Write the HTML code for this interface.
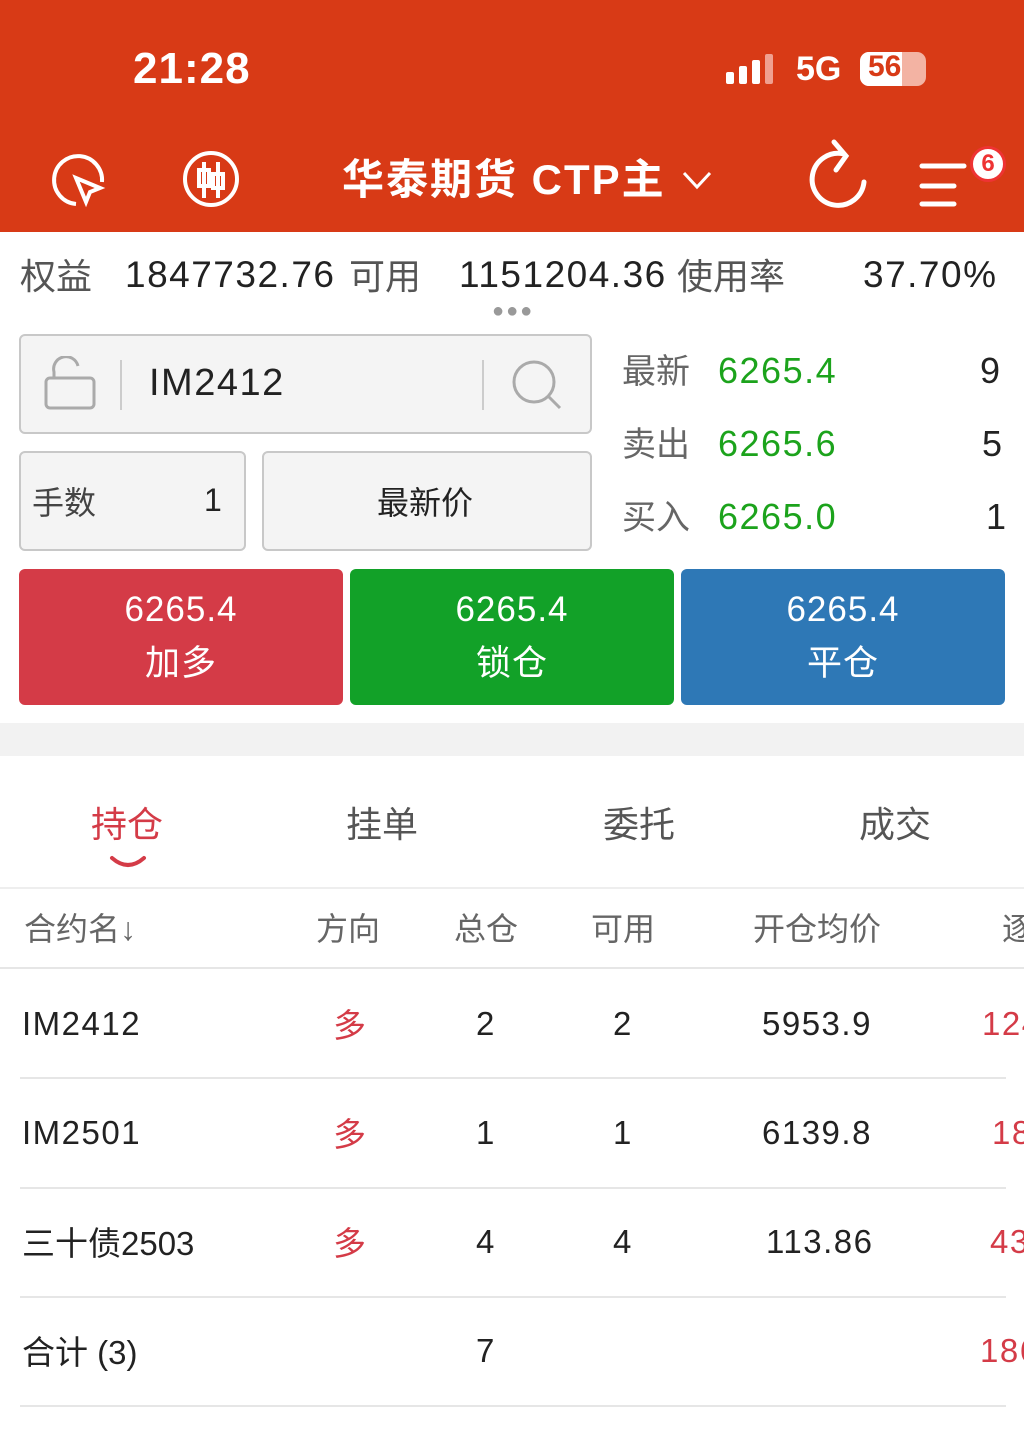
<!DOCTYPE html>
<html><head><meta charset="utf-8"><style>
*{margin:0;padding:0;box-sizing:border-box}
body{width:1024px;height:1455px;overflow:hidden;background:#fff;font-family:"Liberation Sans","Noto Sans CJK SC",sans-serif;position:relative;color:#222}
.a{position:absolute;white-space:nowrap}
.hdr{position:absolute;left:0;top:0;width:1024px;height:232px;background:#D83A16}
.box{position:absolute;background:#f4f4f4;border:2px solid #c8c8c8;border-radius:6px}
.btn{position:absolute;top:569px;height:136px;width:324px;border-radius:6px;color:#fff;text-align:center;font-size:35px;line-height:54px;padding-top:14px;letter-spacing:1px}
.row{position:absolute;left:0;width:1024px;font-size:33px;letter-spacing:1.5px}
.row>span{position:absolute;white-space:nowrap}
.row>span.k{top:-6px}
.ln{position:absolute;left:20px;width:986px;height:2px;background:#e6e6e6}
.n{letter-spacing:1.5px}
</style></head><body>
<div class="hdr"></div>
<div class="a" style="left:133px;top:44px;font-size:44px;font-weight:bold;color:#fff;letter-spacing:1px">21:28</div>
<svg class="a" style="left:726px;top:54px" width="50" height="32"><rect x="0" y="18" width="8" height="12" rx="2" fill="#fff"/><rect x="13" y="12" width="8" height="18" rx="2" fill="#fff"/><rect x="26" y="6" width="8" height="24" rx="2" fill="#fff"/><rect x="39" y="0" width="8" height="30" rx="2" fill="#f0a090"/></svg>
<div class="a" style="left:796px;top:50px;font-size:34px;font-weight:bold;color:#fff">5G</div>
<div class="a" style="left:860px;top:52px;width:66px;height:34px;border-radius:9px;background:#f3b3a3"></div>
<div class="a" style="left:860px;top:52px;width:42px;height:34px;border-radius:9px 0 0 9px;background:#fff"></div>
<div class="a" style="left:868px;top:50px;font-size:30px;font-weight:bold;color:#D83A16">56</div>
<svg class="a" style="left:50px;top:152px" width="56" height="56" fill="none" stroke="#fff" stroke-width="4"><path d="M26 52A24 24 0 1 1 52 30"/><path d="M26 26L50 36L40 40L36 50Z"/></svg>
<svg class="a" style="left:182px;top:150px" width="58" height="58" fill="none" stroke="#fff" stroke-width="4"><circle cx="29" cy="29" r="26"/><path d="M22 12V48M36 12V48"/><rect x="17" y="20" width="10" height="16"/><rect x="31" y="24" width="10" height="14"/></svg>
<div class="a" style="left:342px;top:146px;font-size:42px;font-weight:bold;color:#fff;letter-spacing:2px">华泰期货 CTP主</div>
<svg class="a" style="left:682px;top:170px" width="30" height="20" fill="none" stroke="#fff" stroke-width="3"><path d="M2 3L15 17L28 3"/></svg>
<svg class="a" style="left:806px;top:138px" width="66" height="74" fill="none" stroke="#fff" stroke-width="5" stroke-linecap="round"><path d="M38 16A26 26 0 1 0 58 44"/><path d="M28 4L40 18L30 32"/></svg>
<svg class="a" style="left:918px;top:160px" width="50" height="50" stroke="#fff" stroke-width="5" stroke-linecap="round"><path d="M4 6H46M4 26H36M4 44H36"/></svg>
<div class="a" style="left:970px;top:146px;width:36px;height:36px;border-radius:50%;background:#fff;border:3px solid #e33;color:#e33;font-size:24px;font-weight:bold;text-align:center;line-height:30px">6</div>

<div class="a" style="left:20px;top:248px;font-size:36px;color:#555">权益</div>
<div class="a n" style="left:125px;top:254px;font-size:37px;color:#222">1847732.76</div>
<div class="a" style="left:349px;top:248px;font-size:36px;color:#555">可用</div>
<div class="a n" style="left:459px;top:254px;font-size:37px;color:#222">1151204.36</div>
<div class="a" style="left:677px;top:248px;font-size:36px;color:#555">使用率</div>
<div class="a n" style="left:863px;top:254px;font-size:37px;color:#222">37.70%</div>
<div class="a" style="left:492px;top:300px;font-size:20px;color:#999;letter-spacing:2px">●●●</div>

<div class="box" style="left:19px;top:334px;width:573px;height:100px"></div>
<svg class="a" style="left:42px;top:356px" width="56" height="56" fill="none" stroke="#aaa" stroke-width="3"><rect x="4" y="22" width="48" height="30" rx="4"/><path d="M12 22V16A12 12 0 0 1 36 10"/></svg>
<div class="a" style="left:120px;top:360px;width:2px;height:50px;background:#ccc"></div>
<div class="a n" style="left:149px;top:362px;font-size:38px;color:#222">IM2412</div>
<div class="a" style="left:482px;top:360px;width:2px;height:50px;background:#ccc"></div>
<svg class="a" style="left:510px;top:358px" width="56" height="56" fill="none" stroke="#aaa" stroke-width="3"><circle cx="24" cy="24" r="20"/><path d="M38 38L50 50"/></svg>
<div class="box" style="left:19px;top:451px;width:227px;height:100px"></div>
<div class="a" style="left:32px;top:478px;font-size:32px;color:#444">手数</div>
<div class="a" style="left:204px;top:482px;font-size:32px;color:#222">1</div>
<div class="box" style="left:262px;top:451px;width:330px;height:100px"></div>
<div class="a" style="left:377px;top:478px;font-size:32px;color:#222">最新价</div>

<div class="a" style="left:622px;top:344px;font-size:34px;color:#666">最新</div>
<div class="a n" style="left:718px;top:350px;font-size:36px;color:#1ca31c">6265.4</div>
<div class="a" style="left:980px;top:350px;font-size:36px;color:#222">9</div>
<div class="a" style="left:622px;top:417px;font-size:34px;color:#666">卖出</div>
<div class="a n" style="left:718px;top:423px;font-size:36px;color:#1ca31c">6265.6</div>
<div class="a" style="left:982px;top:423px;font-size:36px;color:#222">5</div>
<div class="a" style="left:622px;top:490px;font-size:34px;color:#666">买入</div>
<div class="a n" style="left:718px;top:496px;font-size:36px;color:#1ca31c">6265.0</div>
<div class="a" style="left:986px;top:496px;font-size:36px;color:#222">1</div>

<div class="btn" style="left:19px;background:#D43B47">6265.4<br>加多</div>
<div class="btn" style="left:350px;background:#12A128">6265.4<br>锁仓</div>
<div class="btn" style="left:681px;background:#2E78B6">6265.4<br>平仓</div>

<div class="a" style="left:0;top:723px;width:1024px;height:33px;background:#f2f2f2"></div>
<div class="a" style="left:91px;top:796px;font-size:36px;color:#D43B47">持仓</div>
<svg class="a" style="left:108px;top:852px" width="40" height="20" fill="none" stroke="#D43B47" stroke-width="4" stroke-linecap="round"><path d="M4 6Q20 20 36 6"/></svg>
<div class="a" style="left:346px;top:796px;font-size:36px;color:#555">挂单</div>
<div class="a" style="left:603px;top:796px;font-size:36px;color:#555">委托</div>
<div class="a" style="left:859px;top:796px;font-size:36px;color:#555">成交</div>
<div class="a" style="left:0;top:887px;width:1024px;height:2px;background:#eee"></div>

<div class="row" style="top:904px;color:#666;font-size:32px;letter-spacing:0"><span style="left:24px">合约名↓</span><span style="left:316px">方向</span><span style="left:454px">总仓</span><span style="left:591px">可用</span><span style="left:753px">开仓均价</span><span style="left:1002px">逐</span></div>
<div class="a" style="left:0;top:967px;width:1024px;height:2px;background:#e6e6e6"></div>

<div class="row" style="top:1005px"><span style="left:22px">IM2412</span><span class="k" style="left:333px;color:#D43B47">多</span><span style="left:476px">2</span><span style="left:613px">2</span><span style="left:762px">5953.9</span><span style="left:982px;color:#D43B47">124</span></div>
<div class="ln" style="top:1077px"></div>
<div class="row" style="top:1114px"><span style="left:22px">IM2501</span><span class="k" style="left:333px;color:#D43B47">多</span><span style="left:476px">1</span><span style="left:613px">1</span><span style="left:762px">6139.8</span><span style="left:992px;color:#D43B47">18</span></div>
<div class="ln" style="top:1187px"></div>
<div class="row" style="top:1223px"><span class="k" style="left:22px;letter-spacing:0">三十债2503</span><span class="k" style="left:333px;color:#D43B47">多</span><span style="left:476px">4</span><span style="left:613px">4</span><span style="left:766px">113.86</span><span style="left:990px;color:#D43B47">43</span></div>
<div class="ln" style="top:1296px"></div>
<div class="row" style="top:1332px"><span class="k" style="left:22px;letter-spacing:0">合计 (3)</span><span style="left:476px">7</span><span style="left:980px;color:#D43B47">186</span></div>
<div class="ln" style="top:1405px"></div>
</body></html>
